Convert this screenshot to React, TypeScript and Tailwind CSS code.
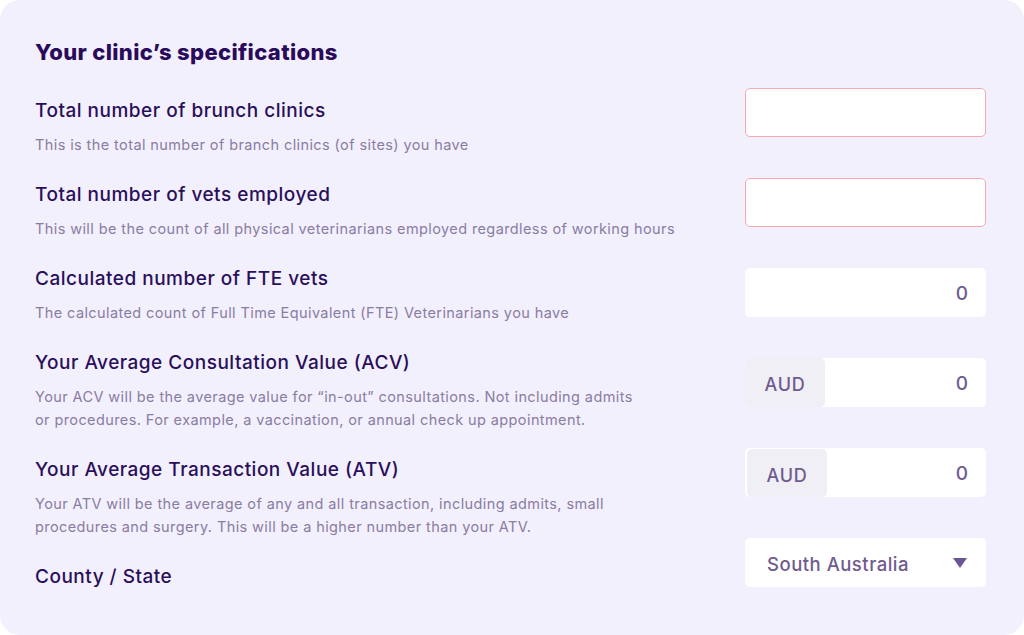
import React from "react";

type Spec = {
  label: string;
  lines: string[];
};

const specs: Spec[] = [
  { label: "Total number of brunch clinics", lines: ["This is the total number of branch clinics (of sites) you have"] },
  {
    label: "Total number of vets employed",
    lines: ["This will be the count of all physical veterinarians employed regardless of working hours"],
  },
  {
    label: "Calculated number of FTE vets",
    lines: ["The calculated count of Full Time Equivalent (FTE) Veterinarians you have"],
  },
  {
    label: "Your Average Consultation Value (ACV)",
    lines: [
      "Your ACV will be the average value for \u201cin-out\u201d consultations. Not including admits",
      "or procedures. For example, a vaccination, or annual check up appointment.",
    ],
  },
  {
    label: "Your Average Transaction Value (ATV)",
    lines: [
      "Your ATV will be the average of any and all transaction, including admits, small",
      "procedures and surgery. This will be a higher number than your ATV.",
    ],
  },
  { label: "County / State", lines: [] },
];

function AudField({ shift }: { shift?: boolean }) {
  return (
    <div className="flex h-[49px] overflow-hidden rounded-[5px] bg-white">
      <div
        className={
          shift
            ? "mt-px ml-[2px] flex w-[80px] items-center justify-center rounded-[5px] bg-[#efeff5] pt-[4px] text-[18px] font-medium tracking-[0.8px] text-[#6f5b8f]"
            : "flex w-[80px] items-center justify-center rounded-[5px] bg-[#efeff5] pt-[4px] text-[18px] font-medium tracking-[0.8px] text-[#6f5b8f]"
        }
      >
        AUD
      </div>
      <div className="flex flex-1 items-center justify-end pt-[4px] pr-[18px] text-[19px] font-medium text-[#6f5b8f]">0</div>
    </div>
  );
}

export default function App() {
  return (
    <div className="h-[635px] w-[1024px] bg-white font-['Inter',sans-serif]">
      <div className="flex h-full rounded-[20px] bg-[#f2f0fd] pl-[35px] pr-[38px]">
        <div className="flex-1 pt-[38px]">
          <h2 className="text-[22px] font-extrabold leading-[28px] tracking-[0.35px] text-[#2a0b5b]">
            Your clinic&rsquo;s specifications
          </h2>
          <div className="mt-[33px] flex flex-col gap-[27px]">
            {specs.map((s) => (
              <div key={s.label}>
                <h3 className="text-[19px] font-medium leading-6 tracking-[0.5px] text-[#2a0f5a]">{s.label}</h3>
                {s.lines.length > 0 ? (
                  <p className="mt-[10px] text-[14.5px] leading-[23px] tracking-[0.4px] text-[#8a7ca2]">
                    {s.lines.map((l, i) => (
                      <span key={i} className="block whitespace-nowrap">
                        {l}
                      </span>
                    ))}
                  </p>
                ) : null}
              </div>
            ))}
          </div>
        </div>

        <div className="flex w-[241px] shrink-0 flex-col gap-[41px] pt-[88px]">
          <div className="h-[49px] rounded-[5px] border border-[#f4a9b2] bg-white" />
          <div className="h-[49px] rounded-[5px] border border-[#f4a9b2] bg-white" />
          <div className="flex h-[49px] items-center justify-end rounded-[5px] bg-white pt-[4px] pr-[18px] text-[19px] font-medium text-[#6f5b8f]">
            0
          </div>
          <AudField />
          <AudField shift />
          <div className="flex h-[49px] items-center justify-between rounded-[5px] bg-white pl-[22px] pr-[19px] text-[18.5px] font-medium tracking-[0.5px] text-[#6f5b8f]">
            <span className="pt-[4px]">South Australia</span>
            <svg width="14" height="10" viewBox="0 0 14 10">
              <path d="M0 0 H14 L7 10 Z" fill="#6a5690" />
            </svg>
          </div>
        </div>
      </div>
    </div>
  );
}
